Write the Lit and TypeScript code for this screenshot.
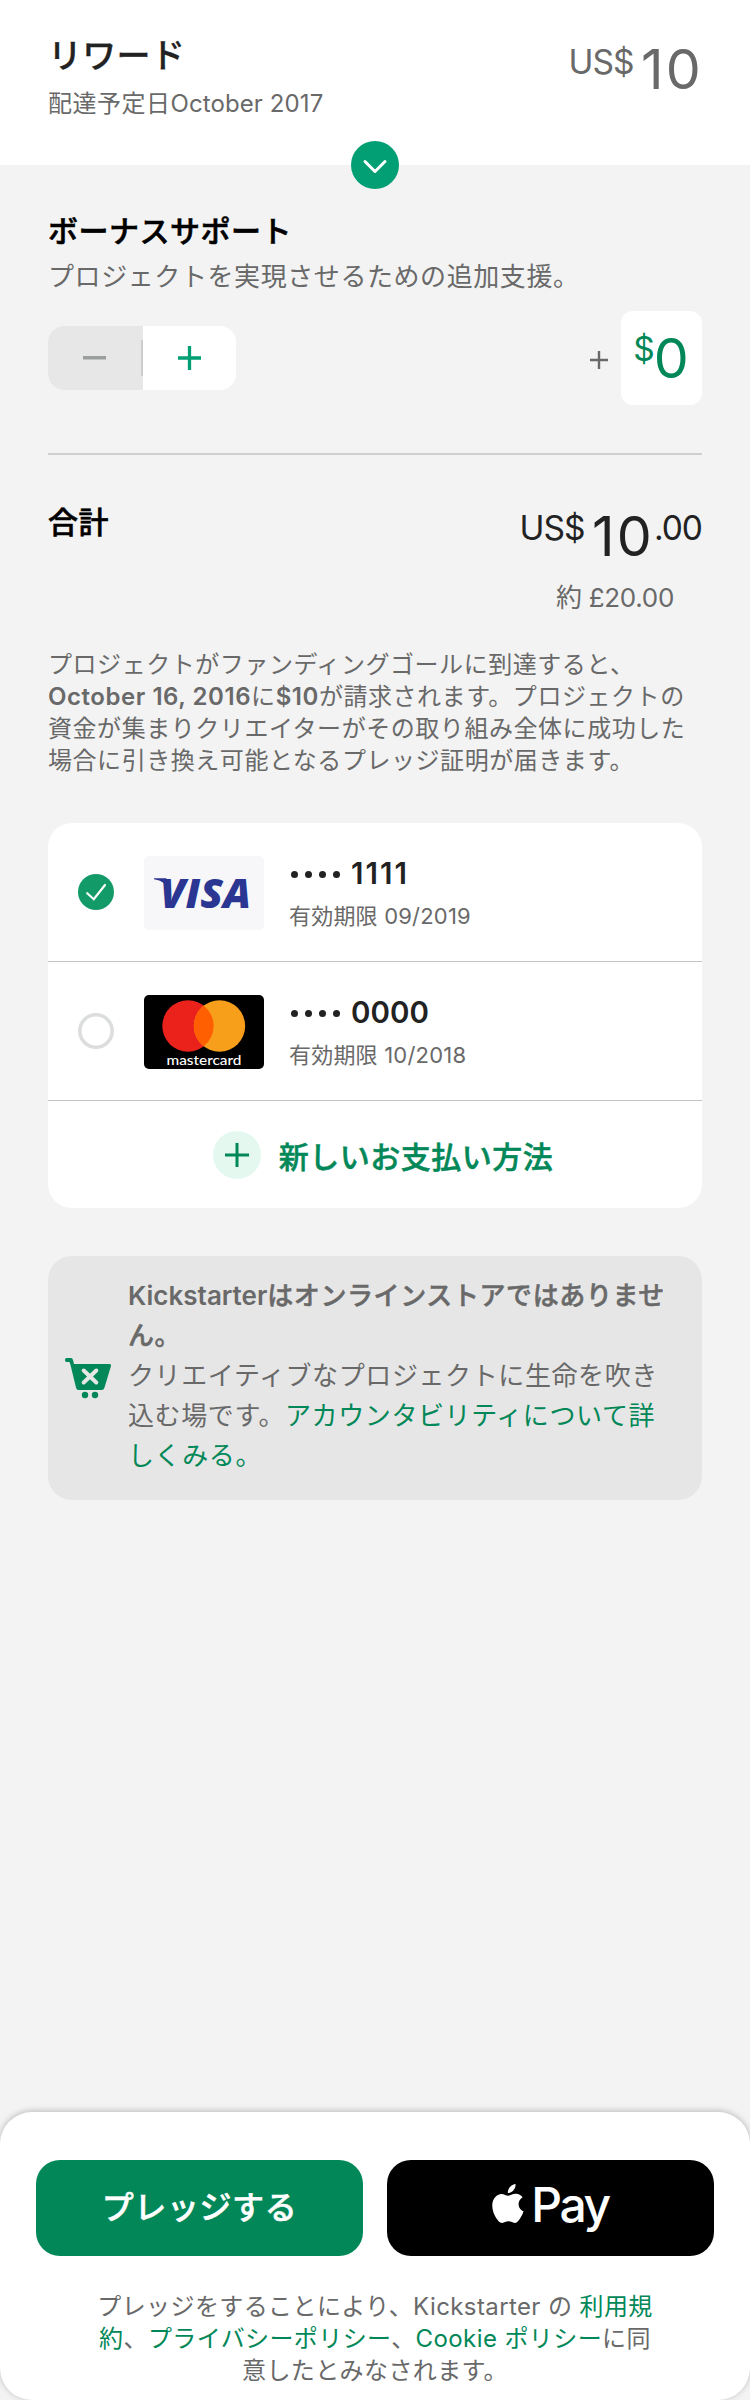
import { LitElement, html, css, svg } from "lit";
import { customElement, property } from "lit/decorators.js";

const base = css`
  * { box-sizing: border-box; }
  :host { display: block; font-family: Inter, "Noto Sans CJK JP", sans-serif; }
  svg { display: block; }
  .line { display: block; white-space: nowrap; }
`;

@customElement("money-text")
class MoneyText extends LitElement {
  @property() currency = "US$";
  @property() whole = "10";
  @property() cents = "";
  static styles = [base, css`
    :host { display: flex; align-items: flex-start; white-space: nowrap; }
    .small { font-size: 33.500px; line-height: 42px; height: 42px; letter-spacing: -1px; }
    .big { font-size: 55.500px; line-height: 60px; height: 60px; margin-top: var(--drop, -2px); letter-spacing: 2.200px; }
    .gap { margin-right: 7.500px; }
  `];
  render() {
    return html`<span class="small ${this.currency.length > 1 ? "gap" : ""}">${this.currency}</span><span class="big">${this.whole}</span>${this.cents ? html`<span class="small">${this.cents}</span>` : ""}`;
  }
}

const visa = html`<svg width="120" height="74" viewBox="0 0 120 74">
  <rect width="120" height="74" rx="5" fill="#f7f7fa"/>
  <text x="16" y="51.700" font-family="Open Sans" font-size="41" font-weight="800" font-style="italic" fill="#2a3692" textLength="91" lengthAdjust="spacingAndGlyphs">VISA</text>
  <path d="M10 22.300h12l3 3-3 5c-2-4-6-6-12-7z" fill="#2a3692"/>
</svg>`;

const mastercard = html`<svg width="120" height="74" viewBox="0 0 120 74">
  <rect width="120" height="74" rx="5" fill="#000"/>
  <circle cx="44" cy="31" r="25.700" fill="#eb221c"/>
  <circle cx="75.500" cy="31" r="25.700" fill="#f79f1b"/>
  <path d="M59.750 10.700a25.700 25.700 0 0 1 0 40.600a25.700 25.700 0 0 1 0-40.600z" fill="#ff5f00"/>
  <text x="22.500" y="69.500" font-family="Lato" font-weight="500" font-size="14" fill="#fff" textLength="75" lengthAdjust="spacingAndGlyphs">mastercard</text>
</svg>`;

@customElement("card-row")
class CardRow extends LitElement {
  @property() number = "";
  @property() expiry = "";
  @property() brand = "visa";
  @property({ type: Boolean }) selected = false;
  static styles = [base, css`
    :host { border-bottom: 1px solid #c4c4c4; }
    .row { display: flex; height: 138px; padding-left: 30px; }
    .mark { margin: 51px 30px 0 0; }
    .logo { margin: 33px 25px 0 0; }
    .info { padding-top: 30px; }
    .number { font-size: 29.500px; line-height: 40px; font-weight: 600; color: #222; display: flex; align-items: center; }
    .dots { display: flex; gap: 7px; margin: 2px 11px 0 2px; }
    .dot { width: 7px; height: 7px; border-radius: 50%; background: #222; }
    .ones { letter-spacing: 2px; }
    .expiry { font-size: 22px; line-height: 32px; color: #696969; margin-top: 7px; letter-spacing: 0.2px; }
  `];
  render() {
    return html`<div class="row">
      <svg class="mark" width="36" height="36" viewBox="0 0 36 36">
        ${this.selected
          ? svg`<circle cx="18" cy="18" r="18" fill="#129b68"/><path d="M9.200 19.200L15.800 25.200L27 11" fill="none" stroke="#fff" stroke-width="2.200" stroke-linecap="round"/>`
          : svg`<circle cx="18" cy="18" r="16.200" fill="#fff" stroke="#dcdedd" stroke-width="3.600"/>`}
      </svg>
      <div class="logo">${this.brand === "visa" ? visa : mastercard}</div>
      <div class="info">
        <div class="number"><span class="dots">${[0, 1, 2, 3].map(() => html`<i class="dot"></i>`)}</span><span class=${/^1+$/.test(this.number) ? "ones" : ""}>${this.number}</span></div>
        <div class="expiry line">有効期限 ${this.expiry}</div>
      </div>
    </div>`;
  }
}

@customElement("app-root")
class AppRoot extends LitElement {
  static styles = [base, css`
    :host { width: 750px; height: 2400px; background: #f3f3f3; }
    .page { display: flex; flex-direction: column; height: 2400px; }
    .header { position: relative; height: 165px; background: #fff; padding: 32px 47px 0 48px; display: flex; justify-content: space-between; }
    .title { font-size: 34px; line-height: 48px; font-weight: 500; color: #222; -webkit-text-stroke: 0.3px #222; letter-spacing: 0.3px; }
    .date { font-size: 24px; line-height: 32px; color: #696969; margin-top: 8px; letter-spacing: 0.5px; }
    .date span { letter-spacing: 0.1px; }
    .header money-text { color: #696969; margin-top: 9px; }
    .toggle { position: absolute; left: 351px; bottom: -24px; }
    .content { padding: 0 48px; }
    .h { font-size: 30px; line-height: 40px; font-weight: 500; -webkit-text-stroke: 0.6px #000; color: #000; letter-spacing: 0.5px; }
    .bonus { margin-top: 46px; }
    .sub { font-size: 26px; line-height: 36px; color: #696969; margin-top: 8px; letter-spacing: 0.58px; }
    .controls { display: flex; justify-content: space-between; height: 94px; margin-top: 16px; }
    .stepper { display: flex; width: 188px; height: 64px; margin-top: 15px; border-radius: 16px; overflow: hidden; background: #fff; }
    .minus { width: 95px; background: #e7e7e7; display: flex; align-items: center; justify-content: flex-end; }
    .minus svg { margin-right: 35px; }
    .divider { width: 2px; height: 36px; background: #cdcdcd; }
    .plus { flex: 1; display: flex; align-items: center; justify-content: center; }
    .amount { display: flex; }
    .amount > svg { margin: 40px 13px 0 0; }
    .box { --drop: 0px; width: 81px; height: 94px; border-radius: 12px; background: #fff; color: #028858; display: flex; justify-content: center; padding: 17px 0 0 1px; }
    .rule { height: 2px; background: #cfcfcf; margin-top: 48px; }
    .total { display: flex; justify-content: space-between; margin-top: 44px; height: 80px; }
    .total .h { margin-top: 3px; }
    .total money-text { color: #222; margin-top: 8px; --drop: -1px; }
    .approx { font-size: 26px; line-height: 36px; color: #696969; text-align: right; padding-right: 28px; margin-top: 1px; letter-spacing: -0.3px; }
    .note { margin-top: 33px; font-size: 24px; line-height: 32px; letter-spacing: 0.55px; color: #696969; }
    b { font-weight: 600; }
    .cards { margin-top: 46px; height: 385px; border-radius: 24px; background: #fff; overflow: hidden; }
    .add { height: 107px; display: flex; align-items: center; justify-content: center; gap: 18px; color: #028858; padding-left: 16px; font-size: 30px; font-weight: 500; -webkit-text-stroke: 0.5px #028858; letter-spacing: 0.5px; }
    .info { margin-top: 48px; height: 244px; border-radius: 24px; background: #e6e6e6; padding: 20px 0 0 17px; display: flex; }
    .info > svg { margin: 82px 15px 0 0; }
    .infotext { font-size: 26px; line-height: 40px; color: #696969; letter-spacing: 0.6px; }
    .semi { font-weight: 500; -webkit-text-stroke: 0.5px #696969; }
    .semi b { -webkit-text-stroke: 0; letter-spacing: 0; }
    .g { color: #028858; }
    .footer { margin-top: auto; height: 288px; border-radius: 32px; background: #fff; box-shadow: 0 -1px 6px rgba(0,0,0,.24); padding: 48px 36px 0; }
    .buttons { display: flex; gap: 24px; }
    .btn { flex: 1; height: 96px; border-radius: 24px; display: flex; align-items: center; justify-content: center; color: #fff; font-size: 32px; }
    .pledge { background: #028858; font-weight: 500; -webkit-text-stroke: 0.5px #fff; letter-spacing: 0.6px; padding-bottom: 6px; }
    .apple { background: #000; align-items: flex-start; }
    .apple svg { margin: 24px 7px 0 0; }
    .pay { font-size: 48px; font-weight: 500; line-height: 60px; margin-top: 15px; letter-spacing: -2.400px; }
    .legal { margin-top: 35px; text-align: center; font-size: 24px; line-height: 32px; color: #696969; letter-spacing: 0.4px; }
  `];
  render() {
    return html`<div class="page">
      <div class="header">
        <div><div class="title line">リワード</div><div class="date line">配達予定日<span>October 2017</span></div></div>
        <money-text></money-text>
        <svg class="toggle" width="48" height="48" viewBox="0 0 48 48"><circle cx="24" cy="24" r="24" fill="#029e74"/><path d="M14 20.500L24 30.500L34 20.500" fill="none" stroke="#fff" stroke-width="3" stroke-linecap="round" stroke-linejoin="round"/></svg>
      </div>
      <div class="content">
        <div class="h bonus line">ボーナスサポート</div>
        <div class="sub line">プロジェクトを実現させるための追加支援。</div>
        <div class="controls">
          <div class="stepper">
            <div class="minus"><svg width="23" height="4"><rect width="23" height="3.500" fill="#9b9e9e"/></svg><div class="divider"></div></div>
            <div class="plus"><svg width="24" height="24"><path d="M0 12H23M11.500 0V24" stroke="#029e74" stroke-width="3.300"/></svg></div>
          </div>
          <div class="amount">
            <svg width="18" height="18"><path d="M0 9H18M9 0V18" stroke="#696969" stroke-width="2.400"/></svg>
            <div class="box"><money-text currency="$" whole="0"></money-text></div>
          </div>
        </div>
        <div class="rule"></div>
        <div class="total"><div class="h line">合計</div><money-text cents=".00"></money-text></div>
        <div class="approx line">約 £20.00</div>
        <div class="note">
          <span class="line">プロジェクトがファンディングゴールに到達すると、</span>
          <span class="line"><b>October 16, 2016</b>に<b>$10</b>が請求されます。プロジェクトの</span>
          <span class="line">資金が集まりクリエイターがその取り組み全体に成功した</span>
          <span class="line">場合に引き換え可能となるプレッジ証明が届きます。</span>
        </div>
        <div class="cards">
          <card-row number="1111" expiry="09/2019" brand="visa" selected></card-row>
          <card-row number="0000" expiry="10/2018" brand="mastercard"></card-row>
          <div class="add"><svg width="48" height="48"><circle cx="24" cy="24" r="24" fill="#e4f8f0"/><path d="M12 24H36M24 12V36" stroke="#028858" stroke-width="3"/></svg><span>新しいお支払い方法</span></div>
        </div>
        <div class="info">
          <svg width="48" height="41" viewBox="0 0 48 41">
            <path d="M1.500 0H6Q7.500 0 8 2L9 6H44.500Q46.500 6 46 8L39.500 29.500Q38.800 32 36.500 32H13.500Q11.500 32 11 29.500L5.500 7L4.500 4H1.500Q0 4 0 2T1.500 0Z" fill="#028858"/>
            <path d="M18.700 12.500L31.300 24.500M31.300 12.500L18.700 24.500" stroke="#e6e6e6" stroke-width="4" stroke-linecap="round"/>
            <circle cx="20" cy="37" r="3.200" fill="#028858"/><circle cx="30" cy="37" r="3.200" fill="#028858"/>
          </svg>
          <div class="infotext">
            <span class="line semi"><b>Kickstarter</b>はオンラインストアではありませ</span>
            <span class="line semi">ん。</span>
            <span class="line">クリエイティブなプロジェクトに生命を吹き</span>
            <span class="line">込む場です。<span class="g">アカウンタビリティについて詳</span></span>
            <span class="line g">しくみる。</span>
          </div>
        </div>
      </div>
      <div class="footer">
        <div class="buttons">
          <div class="btn pledge">プレッジする</div>
          <div class="btn apple">
            <svg width="32" height="39" viewBox="0 0 32 39"><path fill="#fff" d="M23.500 0C23.800 2.500 22.800 4.700 21.300 6.400C19.800 8.100 17.900 9.100 15.900 8.900C15.700 6.600 16.700 4.500 18 3C19.400 1.300 21.700.1 23.500 0ZM30.600 13.200C28.500 14.500 26.500 16.800 26.600 20.200C26.700 24.200 29.500 26.400 31.600 27.300C30.900 29.400 29.900 31.600 28.500 33.700C27.100 35.700 25.600 38.800 22.800 38.900C20.400 38.900 19.500 37.300 16.500 37.300C13.500 37.300 12.500 38.800 10.200 38.900C7.600 39 5.800 36.300 4.300 34.200C1.300 29.900-1.200 22.200 1.200 16.300C2.500 12.800 5.700 10.200 9.200 9.900C12 9.800 14.200 11.700 16.100 11.700C18 11.700 20.700 9.500 24.200 9.800C26.600 9.900 29 11 30.600 13.200Z"/></svg>
            <span class="pay">Pay</span>
          </div>
        </div>
        <div class="legal">
          <span class="line">プレッジをすることにより、Kickstarter の <span class="g">利用規</span></span>
          <span class="line"><span class="g">約</span>、<span class="g">プライバシーポリシー</span>、<span class="g">Cookie ポリシー</span>に同</span>
          <span class="line">意したとみなされます。</span>
        </div>
      </div>
    </div>`;
  }
}
